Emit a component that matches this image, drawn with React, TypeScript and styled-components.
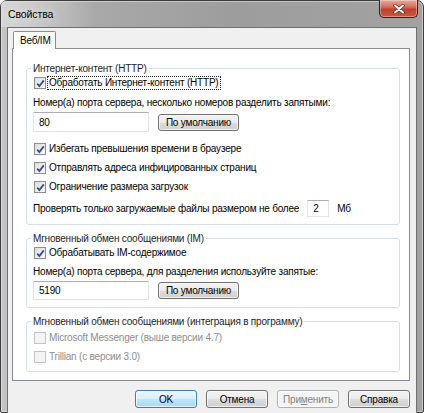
import styled, { createGlobalStyle } from 'styled-components';

const GlobalStyle = createGlobalStyle`
  html, body {
    margin: 0;
    padding: 0;
    background: #ffffff;
  }
  body {
    font-family: 'Liberation Sans', Arial, sans-serif;
    font-size: 10px;
    letter-spacing: -0.2px;
    color: #000;
  }
  * {
    box-sizing: border-box;
  }
`;

const CheckMark = () => (
  <svg width="9" height="9" viewBox="0 0 9 9">
    <path d="M1.2 4.6 L3.4 7 L7.8 1.4" fill="none" stroke="#34508f" strokeWidth="1.8" />
  </svg>
);

const CloseGlyph = () => (
  <svg width="12" height="10" viewBox="0 0 12 10">
    <path d="M2 1.5 L10 8.5 M10 1.5 L2 8.5" stroke="#6a2a22" strokeWidth="3.4" strokeLinecap="round" />
    <path d="M2 1.5 L10 8.5 M10 1.5 L2 8.5" stroke="#ffffff" strokeWidth="2" strokeLinecap="round" />
  </svg>
);

type CheckProps = {
  label: string;
  checked?: boolean;
  disabled?: boolean;
  focused?: boolean;
};

const Checkbox = ({ label, checked, disabled, focused }: CheckProps) => (
  <CheckRow>
    <Box disabled={disabled}>{checked && <CheckMark />}</Box>
    <CheckText disabled={disabled} focused={focused}>
      {label}
    </CheckText>
  </CheckRow>
);

export default function App() {
  return (
    <>
      <GlobalStyle />
      <Window>
        <TitleBar>
          <Title>Свойства</Title>
          <CloseButton>
            <CloseGlyph />
          </CloseButton>
        </TitleBar>
        <Client>
          <TabStrip>
            <Tab>Веб/IM</Tab>
          </TabStrip>
          <Panel>
            <Group>
              <Legend>Интернет-контент (HTTP)</Legend>
              <Checkbox label="Обработать Интернет-контент (HTTP)" checked focused />
              <FieldLabel top={6}>Номер(а) порта сервера, несколько номеров разделить запятыми:</FieldLabel>
              <InputRow top={3}>
                <TextInput width={116} height={20}>80</TextInput>
                <Button>По умолчанию</Button>
              </InputRow>
              <CheckList top={9}>
                <Checkbox label="Избегать превышения времени в браузере" checked />
                <Checkbox label="Отправлять адреса инфицированных страниц" checked />
                <Checkbox label="Ограничение размера загрузок" checked />
              </CheckList>
              <SizeRow>
                <span>Проверять только загружаемые файлы размером не более</span>
                <TextInput width={22} height={17}>2</TextInput>
                <span>Мб</span>
              </SizeRow>
            </Group>
            <Group>
              <Legend>Мгновенный обмен сообщениями (IM)</Legend>
              <Checkbox label="Обрабатывать IM-содержимое" checked />
              <FieldLabel top={5}>Номер(а) порта сервера, для разделения используйте запятые:</FieldLabel>
              <InputRow top={3}>
                <TextInput width={116} height={19}>5190</TextInput>
                <Button>По умолчанию</Button>
              </InputRow>
            </Group>
            <Group>
              <Legend>Мгновенный обмен сообщениями (интеграция в программу)</Legend>
              <CheckList top={2}>
                <Checkbox label="Microsoft Messenger (выше версии 4.7)" disabled />
                <Checkbox label="Trillian (с версии 3.0)" disabled />
              </CheckList>
            </Group>
          </Panel>
          <ButtonBar>
            <DialogButton kind="default">OK</DialogButton>
            <DialogButton>Отмена</DialogButton>
            <DialogButton kind="disabled">
              При<u>м</u>енить
            </DialogButton>
            <DialogButton>Справка</DialogButton>
          </ButtonBar>
        </Client>
      </Window>
    </>
  );
}

const Window = styled.div`
  width: 424px;
  height: 413px;
  display: flex;
  flex-direction: column;
  border: 1px solid #3c3c3c;
  border-radius: 7px 7px 2px 2px;
  padding: 0 6px 6px 6px;
  background: linear-gradient(to right, #c4c4c4 0%, #a9a9a9 22%, #9d9d9d 55%, #a2a2a2 100%);
  box-shadow: inset 0 0 0 1px rgba(255, 255, 255, 0.4);
`;

const TitleBar = styled.div`
  height: 26px;
  display: flex;
  justify-content: space-between;
  align-items: flex-start;
  background: linear-gradient(to right, rgba(230, 230, 230, 0.55) 0%, rgba(230, 230, 230, 0) 22%);
  margin: 0 -6px;
  padding: 0 6px 0 7px;
`;

const Title = styled.div`
  font-size: 10.5px;
  letter-spacing: -0.1px;
  line-height: 27px;
  color: #000;
  text-shadow: 0 0 6px rgba(255, 255, 255, 0.9);
`;

const CloseButton = styled.div`
  width: 39px;
  height: 18px;
  margin-top: -1px;
  margin-right: -1px;
  display: flex;
  align-items: center;
  justify-content: center;
  border: 1px solid #4a1a14;
  border-top: none;
  border-radius: 0 0 5px 5px;
  background: linear-gradient(#e8a99c 0%, #d6705f 40%, #c2402c 55%, #c85a3e 100%);
  box-shadow: inset 0 0 0 1px rgba(255, 255, 255, 0.35);
`;

const Client = styled.div`
  flex: 1;
  display: flex;
  flex-direction: column;
  background: #f0f0f0;
  border: 1px solid #6e6e6e;
  padding: 3px 6px 7px 4px;
`;

const TabStrip = styled.div`
  display: flex;
  padding-left: 1px;
  margin-bottom: -1px;
  position: relative;
  z-index: 1;
`;

const Tab = styled.div`
  height: 18px;
  width: 43px;
  padding-left: 6px;
  line-height: 17px;
  background: #ffffff;
  border: 1px solid #898c95;
  border-bottom: none;
  border-radius: 2px 2px 0 0;
`;

const Panel = styled.div`
  flex: 1;
  display: flex;
  flex-direction: column;
  gap: 7px;
  background: #ffffff;
  border: 1px solid #898c95;
  padding: 13px 9px 8px 13px;
`;

const Group = styled.fieldset`
  margin: 0;
  border: 1px solid #d5dfe5;
  border-radius: 3px;
  padding: 0 8px 7px 6px;
  display: flex;
  flex-direction: column;
  align-items: flex-start;
`;

const Legend = styled.legend`
  padding: 0 2px;
  margin-left: -2px;
  line-height: 13px;
  color: #1e1e1e;
`;

const CheckList = styled.div<{ top?: number }>`
  display: flex;
  flex-direction: column;
  gap: 4px;
  margin-top: ${({ top }) => top ?? 0}px;
`;

const CheckRow = styled.div`
  height: 14px;
  display: flex;
  align-items: center;
  gap: 1px;
  margin-top: 1px;
`;

const Box = styled.span<{ disabled?: boolean }>`
  width: 12px;
  height: 12px;
  margin-left: 1px;
  display: flex;
  align-items: center;
  justify-content: center;
  border: 1px solid ${({ disabled }) => (disabled ? '#c2c2c2' : '#8e8f8f')};
  background: ${({ disabled }) =>
    disabled ? '#f4f4f4' : 'linear-gradient(135deg, #dcdcdc, #fdfdfd)'};
`;

const CheckText = styled.span<{ disabled?: boolean; focused?: boolean }>`
  height: 14px;
  line-height: 12px;
  padding: 0 1px;
  color: ${({ disabled }) => (disabled ? '#8d8d8d' : '#000')};
  border: 1px dotted ${({ focused }) => (focused ? '#202020' : 'transparent')};
`;

const FieldLabel = styled.div<{ top: number }>`
  margin-top: ${({ top }) => top}px;
  line-height: 13px;
`;

const InputRow = styled.div<{ top: number }>`
  margin-top: ${({ top }) => top}px;
  display: flex;
  align-items: center;
  gap: 9px;
`;

const TextInput = styled.div<{ width: number; height: number }>`
  width: ${({ width }) => width}px;
  height: ${({ height }) => height}px;
  display: flex;
  align-items: center;
  padding-left: 5px;
  background: #ffffff;
  border: 1px solid #e2e3ea;
  border-top-color: #abadb3;
`;

const Button = styled.div`
  width: 81px;
  height: 17px;
  display: flex;
  align-items: center;
  justify-content: center;
  border: 1px solid #707070;
  border-radius: 3px;
  background: linear-gradient(#f2f2f2 0%, #ebebeb 50%, #dddddd 51%, #cfcfcf 100%);
  box-shadow: inset 0 0 0 1px rgba(255, 255, 255, 0.7);
`;

const SizeRow = styled.div`
  margin-top: 6px;
  display: flex;
  align-items: center;
  gap: 8px;
`;

const ButtonBar = styled.div`
  margin-top: 9px;
  display: flex;
  justify-content: flex-end;
  gap: 9px;
`;

type Kind = 'normal' | 'default' | 'disabled';

const DialogButton = styled.div<{ kind?: Kind }>`
  width: 62px;
  height: 18px;
  display: flex;
  align-items: center;
  justify-content: center;
  border-radius: 3px;
  border: 1px solid
    ${({ kind }) => (kind === 'default' ? '#3c7fb1' : kind === 'disabled' ? '#adb2b5' : '#707070')};
  color: ${({ kind }) => (kind === 'disabled' ? '#838383' : '#000')};
  background: ${({ kind }) =>
    kind === 'default'
      ? 'linear-gradient(#eaf6fd 0%, #d9f0fc 50%, #bee6fd 51%, #a7d9f5 100%)'
      : kind === 'disabled'
      ? '#f4f4f4'
      : 'linear-gradient(#f2f2f2 0%, #ebebeb 50%, #dddddd 51%, #cfcfcf 100%)'};
  box-shadow: inset 0 0 0 1px rgba(255, 255, 255, 0.7);

  u {
    text-decoration: underline;
  }
`;
